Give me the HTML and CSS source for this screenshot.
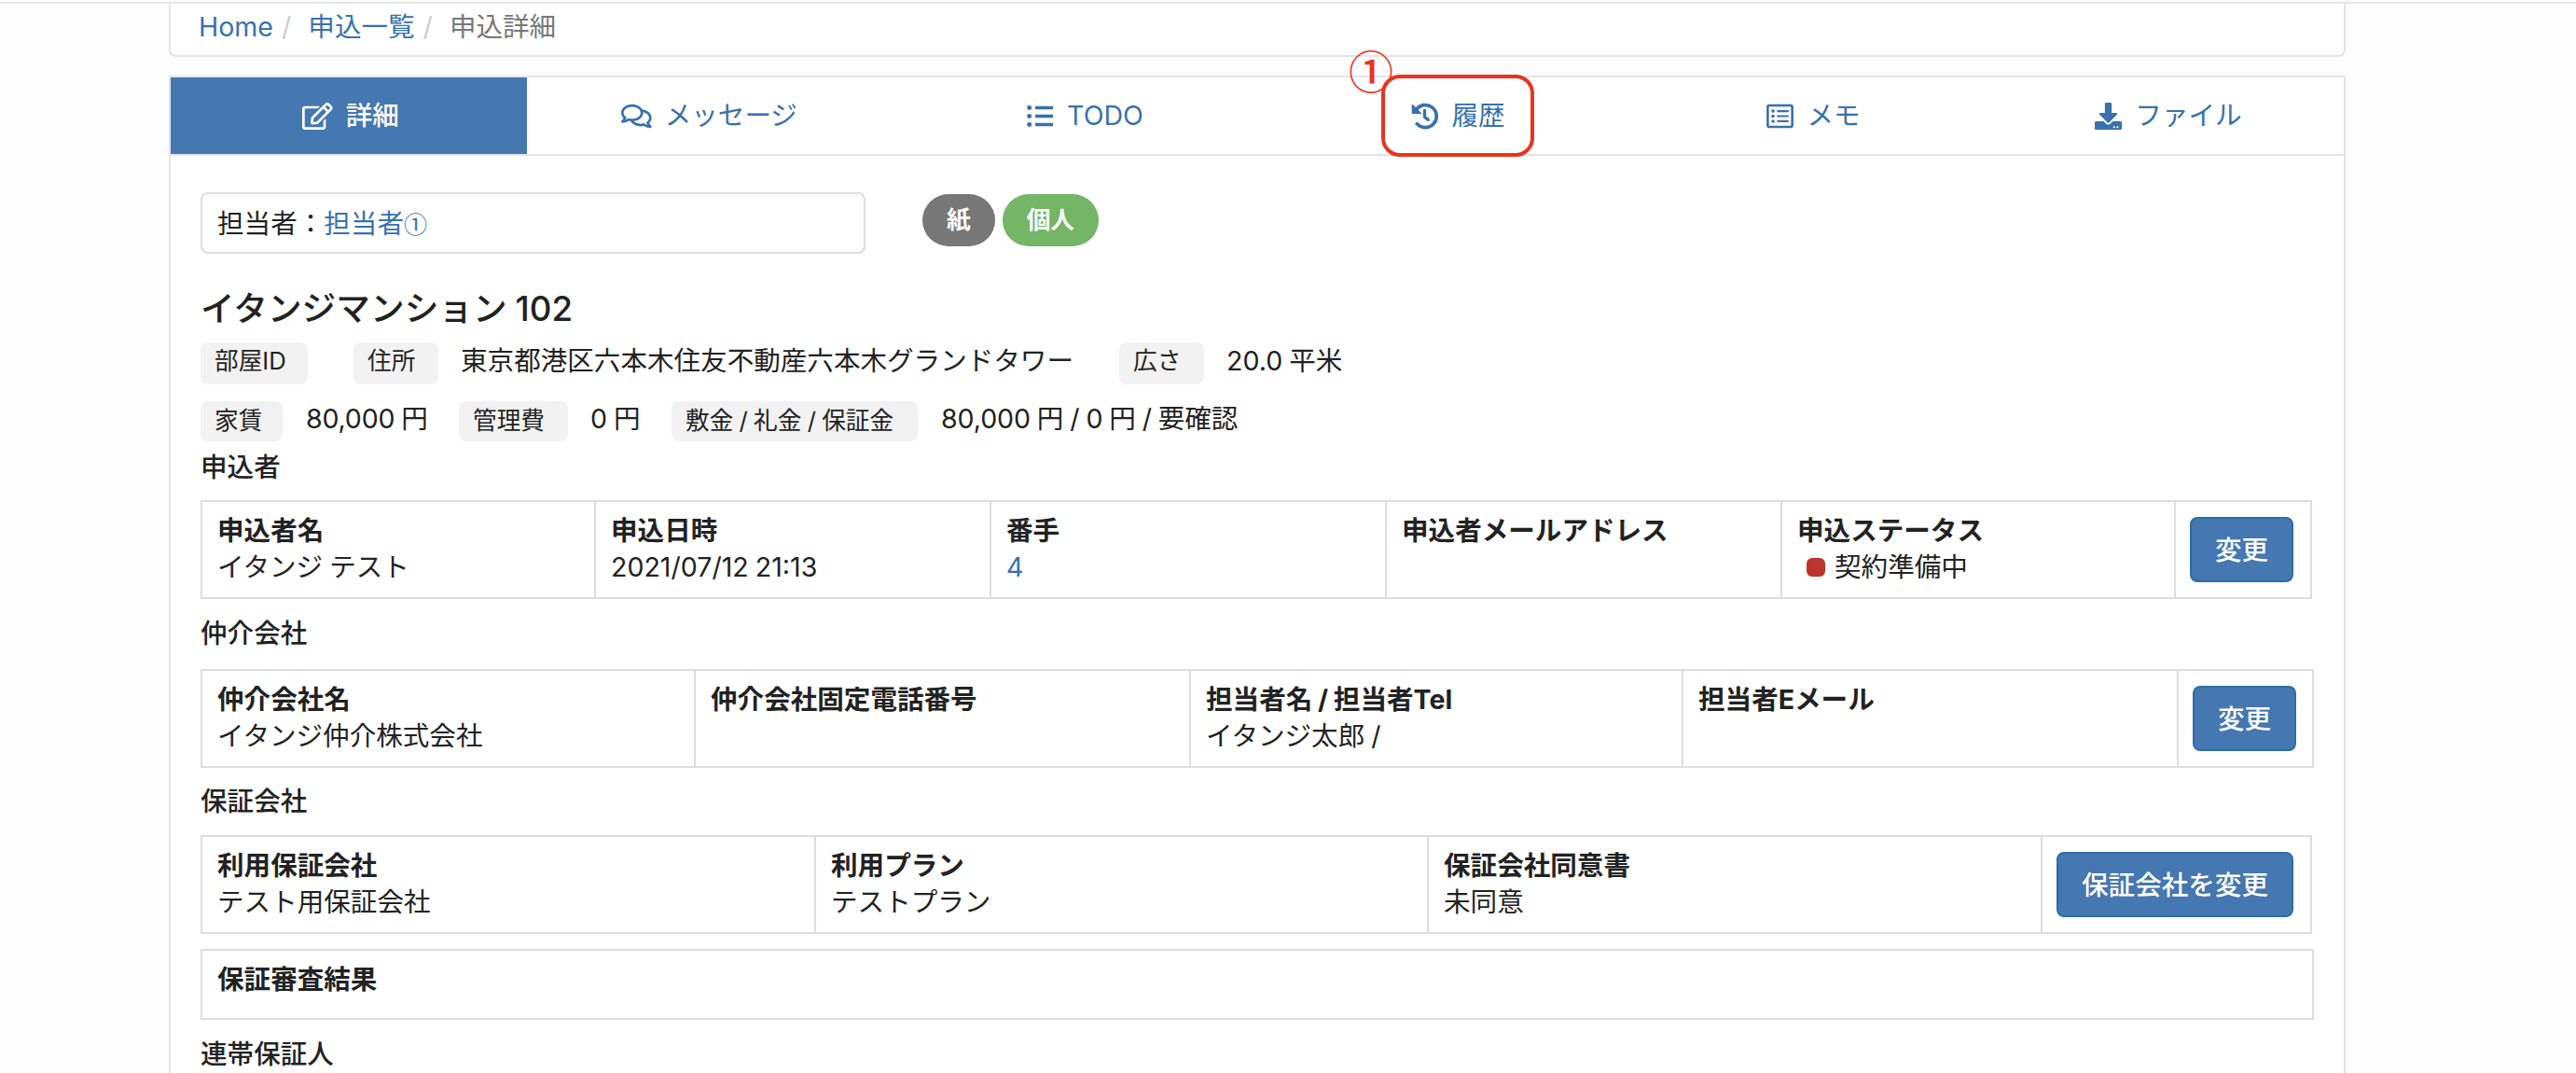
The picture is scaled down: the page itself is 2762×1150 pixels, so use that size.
FILE: index.html
```html
<!DOCTYPE html>
<html lang="ja">
<head>
  <meta charset="UTF-8" />
  <title>申込詳細</title>
  <link rel="stylesheet" href="styles.css">
</head>
<body>

  <div class="container">
    <ol class="breadcrumb">
      <li><a href="#">Home</a></li>
      <li><a href="#">申込一覧</a></li>
      <li class="current">申込詳細</li>
    </ol>

    <div class="panel">
      <nav class="tabs">
        <a href="#" class="tab active">
          <svg class="icon" viewBox="0 0 576 512"><path d="M402.3 344.9l32-32c5-5 13.7-1.5 13.7 5.7V464c0 26.5-21.5 48-48 48H48c-26.5 0-48-21.5-48-48V112c0-26.5 21.5-48 48-48h273.500c7.1 0 10.7 8.6 5.7 13.7l-32 32c-1.5 1.5-3.5 2.3-5.7 2.3H48v352h352V350.500c0-2.1.8-4.1 2.3-5.6zm156.600-201.800L296.300 405.700l-90.400 10c-26.200 2.900-48.500-19.200-45.600-45.600l10-90.400L432.900 17.100c22.900-22.900 59.900-22.900 82.700 0l43.200 43.200c22.900 22.900 22.900 60 .1 82.800zM460.100 174L402 115.900 216.200 301.800l-7.300 65.300 65.300-7.300L460.100 174zm64.800-79.700l-43.200-43.200c-4.1-4.1-10.8-4.1-14.8 0L436 82l58.100 58.100 30.900-30.900c4-4.2 4-10.8-.1-14.900z"/></svg>
          <span>詳細</span>
        </a>
        <a href="#" class="tab">
          <svg class="icon" viewBox="0 0 576 512"><path d="M532 386.200c27.500-27.100 44-61.100 44-98.200 0-80-76.500-146.100-176.200-157.900C368.300 72.500 294.300 32 208 32 93.100 32 0 103.600 0 192c0 37 16.500 71 44 98.200-15.300 30.700-37.300 54.500-37.700 54.900-6.300 6.700-8.100 16.500-4.400 25 3.600 8.500 12 14 21.200 14 53.500 0 96.700-20.200 125.200-38.800 9.200 2.100 18.700 3.700 28.400 4.900C208.100 407.600 281.800 448 368 448c20.800 0 40.800-2.400 59.800-6.800C456.300 459.700 499.400 480 553 480c9.200 0 17.500-5.500 21.200-14 3.600-8.500 1.900-18.300-4.400-25-.4-.3-22.500-24.100-37.800-54.800zm-392.800-92.300L122.100 305c-14.100 9.100-28.500 16.300-43.100 21.400 2.700-4.700 5.400-9.700 8-14.800l15.500-31.100L77.700 256C64.200 242.600 48 220.700 48 192c0-60.700 73.300-112 160-112s160 51.300 160 112-73.300 112-160 112c-16.500 0-33-1.900-49-5.600l-19.800-4.500zM498.300 352l-24.700 24.400 15.500 31.100c2.600 5.100 5.300 10.100 8 14.800-14.600-5.100-29-12.300-43.100-21.400l-17.100-11.100-19.900 4.600c-16 3.700-32.500 5.600-49 5.600-54 0-102.200-20.100-131.300-49.700C338 339.500 416 272.900 416 192c0-3.400-.4-6.700-.7-10C479.700 196.500 528 238.800 528 288c0 28.700-16.200 50.600-29.700 64z"/></svg>
          <span>メッセージ</span>
        </a>
        <a href="#" class="tab">
          <svg class="icon" viewBox="0 0 512 512"><path d="M160 96h336M160 256h336M160 416h336" stroke="currentColor" stroke-width="60"/><circle cx="48" cy="96" r="44"/><circle cx="48" cy="256" r="44"/><circle cx="48" cy="416" r="44"/></svg>
          <span>TODO</span>
        </a>
        <a href="#" class="tab">
          <svg class="icon" viewBox="0 0 512 512"><path d="M92 140a212 212 0 1 1 20 260" fill="none" stroke="currentColor" stroke-width="66" stroke-linecap="round"/><path d="M12 20v170c0 14 8 22 22 22h170L150 150 66 66z"/><path d="M256 150v120l66 54" fill="none" stroke="currentColor" stroke-width="60" stroke-linecap="round"/></svg>
          <span>履歴</span>
          <span class="highlight"></span>
          <span class="step">①</span>
        </a>
        <a href="#" class="tab">
          <svg class="icon" viewBox="0 0 512 512"><rect x="24" y="54" width="464" height="404" rx="28" fill="none" stroke="currentColor" stroke-width="46"/><path d="M200 160h220M200 256h220M200 352h220" stroke="currentColor" stroke-width="38"/><circle cx="124" cy="160" r="32"/><circle cx="124" cy="256" r="32"/><circle cx="124" cy="352" r="32"/></svg>
          <span>メモ</span>
        </a>
        <a href="#" class="tab">
          <svg class="icon" viewBox="0 0 512 512"><path d="M216 0h80c13.300 0 24 10.700 24 24v168h87.700c17.800 0 26.700 21.500 14.100 34.100L269.700 378.300c-7.500 7.500-19.800 7.500-27.300 0L90.100 226.100c-12.600-12.600-3.700-34.100 14.100-34.100H192V24c0-13.300 10.700-24 24-24zm296 376v112c0 13.300-10.700 24-24 24H24c-13.300 0-24-10.700-24-24V376c0-13.300 10.700-24 24-24h146.700l49 49c20.100 20.100 52.500 20.100 72.600 0l49-49H488c13.300 0 24 10.700 24 24zm-124 88c0-11-9-20-20-20s-20 9-20 20 9 20 20 20 20-9 20-20zm64 0c0-11-9-20-20-20s-20 9-20 20 9 20 20 20 20-9 20-20z"/></svg>
          <span>ファイル</span>
        </a>
      </nav>

      <div class="content">
        <div class="top-row">
          <div class="assignee">担当者：<a href="#">担当者<span class="circled">①</span></a></div>
          <span class="badge gray">紙</span>
          <span class="badge green">個人</span>
        </div>

        <h3>イタンジマンション 102</h3>

        <div class="room-info">
          <span class="tag tag-id">部屋ID</span>
          <span class="tag tag-address">住所</span>
          <span class="address">東京都港区六本木住友不動産六本木グランドタワー</span>
          <span class="tag tag-size">広さ</span>
          <span>20.0 平米</span>
        </div>
        <div class="room-info price-info">
          <span class="tag tag-rent">家賃</span>
          <span class="rent">80,000 円</span>
          <span class="tag tag-fee">管理費</span>
          <span class="fee">0 円</span>
          <span class="tag tag-deposit">敷金 / 礼金 / 保証金</span>
          <span>80,000 円 / 0 円 / 要確認</span>
        </div>

        <h4>申込者</h4>
        <div class="info-table applicant">
          <div class="cell"><b>申込者名</b><span>イタンジ テスト</span></div>
          <div class="cell"><b>申込日時</b><span>2021/07/12 21:13</span></div>
          <div class="cell"><b>番手</b><a href="#">4</a></div>
          <div class="cell"><b>申込者メールアドレス</b></div>
          <div class="cell"><b>申込ステータス</b><span class="status">契約準備中</span></div>
          <div class="cell action"><button type="button">変更</button></div>
        </div>

        <h4>仲介会社</h4>
        <div class="info-table agency">
          <div class="cell"><b>仲介会社名</b><span>イタンジ仲介株式会社</span></div>
          <div class="cell"><b>仲介会社固定電話番号</b></div>
          <div class="cell"><b>担当者名 / 担当者Tel</b><span>イタンジ太郎 /</span></div>
          <div class="cell"><b>担当者Eメール</b></div>
          <div class="cell action"><button type="button">変更</button></div>
        </div>

        <h4>保証会社</h4>
        <div class="info-table guarantor">
          <div class="cell"><b>利用保証会社</b><span>テスト用保証会社</span></div>
          <div class="cell"><b>利用プラン</b><span>テストプラン</span></div>
          <div class="cell"><b>保証会社同意書</b><span>未同意</span></div>
          <div class="cell action"><button type="button">保証会社を変更</button></div>
        </div>
        <div class="info-table result">
          <div class="cell"><b>保証審査結果</b></div>
        </div>

        <h4>連帯保証人</h4>
      </div>
    </div>
  </div>

</body>
</html>
```
FILE: styles.css
```css
* {
  box-sizing: border-box;
}

body {
  margin: 0;
  height: 1150px;
  overflow: hidden;
  padding-top: 2px;
  background: #fcfcfc;
  font-family: Inter, "Noto Sans CJK JP", sans-serif;
  font-size: 28.57px;
  line-height: 40px;
  word-spacing: -1px;
  color: #222;
}

a {
  color: #3871ae;
  text-decoration: none;
}

.container {
  width: 2334px;
  margin-left: 181px;
}

body::before {
  content: "";
  display: block;
  height: 2px;
  background: #e7e7e7;
}

.breadcrumb {
  display: flex;
  height: 57px;
  margin: 0 0 20px;
  padding: 5px 30px;
  list-style: none;
  background: #fff;
  border: 2px solid #e4e5ea;
  border-top: 0;
  border-radius: 0 0 8px 8px;
}

.breadcrumb li + li::before {
  content: "/";
  padding: 0 18px 0 9px;
  color: #ccc;
}

.breadcrumb .current {
  color: #777;
}

.panel {
  height: 1100px;
  background: #fff;
  border: 2px solid #e4e5ea;
}

.tabs {
  display: grid;
  grid-template-columns: 382px 390px 416px 384px 378px 380px;
  height: 84px;
  border-bottom: 2px solid #e4e5ea;
}

.tab {
  position: relative;
  display: flex;
  align-items: center;
  justify-content: center;
  gap: 14px;
  padding-left: 1px;
}

.tab:last-child {
  padding-left: 4px;
}

.tab.active {
  padding-left: 4px;
  background: #4577b1;
  color: #fff;
  font-weight: 500;
}

.icon {
  width: auto;
  height: 29px;
  fill: currentColor;
}

.highlight {
  position: absolute;
  top: -3px;
  left: 110px;
  width: 164px;
  height: 88px;
  border: 4px solid #e8351e;
  border-radius: 20px;
}

.step {
  position: absolute;
  top: -33px;
  left: 75px;
  color: #e8351e;
  font-family: "Noto Sans CJK JP", sans-serif;
  font-size: 48px;
  font-weight: 500;
  line-height: 48px;
}

.content {
  padding: 39px 32px 0;
}

.top-row {
  display: flex;
  align-items: flex-start;
}

.assignee {
  width: 713px;
  height: 66px;
  margin-right: 61px;
  padding: 11px 16px;
  border: 2px solid #ddd;
  border-radius: 8px;
}

.circled {
  font-family: "Noto Sans CJK JP", sans-serif;
  font-size: 25px;
}

.badge {
  height: 56px;
  margin: 2px 8px 0 0;
  padding: 0 26px;
  border-radius: 28px;
  color: #fff;
  font-size: 25.7px;
  font-weight: 700;
  line-height: 56px;
}

.gray {
  background: #777;
}

.green {
  background: #75b566;
}

h3 {
  margin: 37px 0 14px;
  font-size: 36.7px;
  font-weight: 500;
  line-height: 44px;
}

.room-info {
  display: flex;
  height: 45px;
}

.price-info {
  height: 43px;
  margin-top: 18px;
}

.price-info > span {
  line-height: 38px;
}

.tag {
  padding-left: 15px;
  border-radius: 8px;
  background: #f2f2f2;
  font-size: 25.7px;
}

.price-info > .tag {
  line-height: 41px;
}

.tag-id {
  width: 115px;
  margin-right: 49px;
}

.tag-address,
.tag-size {
  width: 91px;
  margin-right: 24px;
}

.address {
  width: 706px;
}

.tag-rent {
  width: 88px;
  margin-right: 25px;
}

.rent {
  width: 164px;
  letter-spacing: -0.2px;
}

.tag-fee {
  width: 117px;
  margin-right: 24px;
}

.fee {
  width: 87px;
}

.tag-deposit {
  width: 264px;
  margin-right: 25px;
}

.tag-deposit + span {
  letter-spacing: -0.1px;
}

h4 {
  margin: 0;
  font-size: 28.57px;
  font-weight: 500;
  line-height: 40px;
}

.room-info + h4 {
  margin-top: 8px;
}

.info-table {
  display: grid;
  width: 2264px;
  height: 106px;
  margin: 15px 0 17px;
  border: 2px solid #ddd;
}

.applicant {
  grid-template-columns: 420px 424px 424px 424px 422px 1fr;
}

.agency {
  width: 2266px;
  margin: 18px 0 16px;
  grid-template-columns: 527px 531px 528px 531px 1fr;
}

.guarantor {
  margin: 16px 0;
  grid-template-columns: 656px 657px 658px 1fr;
}

.result {
  width: 2266px;
  height: 76px;
  margin: 0 0 17px;
}

.cell {
  display: flex;
  flex-direction: column;
  padding: 11px 16px;
  line-height: 39px;
}

.cell + .cell {
  border-left: 2px solid #ddd;
}

.cell.action {
  padding: 16px 0 0 15px;
}

.status::before {
  content: "";
  display: inline-block;
  width: 20px;
  height: 20px;
  margin: 0 10px 0 10px;
  border-radius: 6px;
  background: #bc3530;
}

button {
  align-self: flex-start;
  height: 70px;
  padding: 0 25px 4px;
  border: 2px solid #2e6da4;
  border-radius: 8px;
  background: #4577b1;
  color: #fff;
  font-family: inherit;
  font-size: 28.57px;
  font-weight: 500;
}
```
